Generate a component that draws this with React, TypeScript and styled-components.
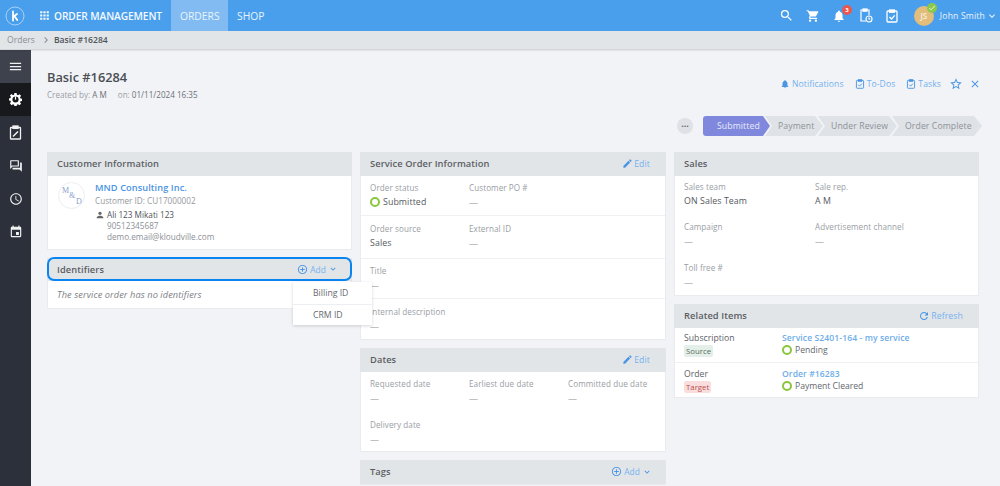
import React from "react";
import styled, { createGlobalStyle } from "styled-components";
import { MdSearch, MdShoppingCart, MdNotifications, MdApps, MdMenu, MdEdit, MdRefresh, MdPerson, MdExpandMore, MdChevronRight, MdClose, MdStarBorder, MdAddCircleOutline, MdEvent, MdOutlineAccessTime, MdOutlineForum, MdCheck } from "react-icons/md";

const Global = createGlobalStyle`
  html, body { margin: 0; padding: 0; height: 486px; overflow: hidden; background: #f2f3f6; }
  body { font-family: "Open Sans", "Noto Sans", sans-serif; font-size: 9px; color: #555; }
  * { box-sizing: border-box; }
`;

const Page = styled.div`width: 1000px; height: 486px; overflow: hidden; display: flex; flex-direction: column;`;
const TopBar = styled.header`height: 31px; flex: none; background: #4a9fec; color: #fff; display: flex; align-items: center; padding-left: 5px;`;
const Logo = styled.svg`width: 20px; height: 20px; flex: none; margin-right: 13px;`;
const AppTitle = styled.div`display: flex; align-items: center; gap: 3px; font-size: 10.2px; font-weight: 600; letter-spacing: -0.01em; margin-right: 10px; color: #f4f9fe; width: 123px; white-space: nowrap; svg { flex: none; }`;
const NavItem = styled.div<{ $active?: boolean }>`height: 31px; padding: 0 10px 0 9px; display: flex; align-items: center; font-size: 10.3px; background: ${p => (p.$active ? "#82bbf1" : "transparent")}; color: #e8f3fd; width: ${p => (p.$active ? "57px" : "auto")};`;
const RightTools = styled.div`margin-left: auto; display: flex; align-items: center; height: 31px; color: #fff;`;
const ToolSlot = styled.div<{ $w: number }>`width: ${p => p.$w}px; display: flex; justify-content: center; position: relative;`;
const Badge = styled.span`position: absolute; top: -4px; left: 16px; width: 10px; height: 10px; border-radius: 50%; background: #e9574f; color: #fff; font-size: 6px; font-weight: 700; line-height: 10px; text-align: center;`;
const Avatar = styled.div`position: relative; width: 20px; height: 20px; border-radius: 50%; background: #e3bd7c; color: #f6f0e2; font-size: 8px; font-weight: 600; line-height: 20px; text-align: center; margin-left: 9px; margin-right: 6px;`;
const AvatarCheck = styled.span`position: absolute; top: -3px; right: -3px; width: 10px; height: 10px; border-radius: 50%; background: #8cc84b; color: #fff; display: flex; align-items: center; justify-content: center;`;
const UserName = styled.div`font-size: 8.6px; letter-spacing: 0.02em; color: #e8f3fd; display: flex; align-items: center; gap: 1px; padding-right: 2px;`;

const Crumbs = styled.div`height: 19px; flex: none; background: #e2e5e8; border-bottom: 1px solid #d4d6d9; box-shadow: 0 1px 1px rgba(0,0,0,.06); display: flex; align-items: center; padding-left: 7px; font-size: 8.6px; color: #8a8f96; position: relative; z-index: 1;`;
const CrumbCurrent = styled.span`font-weight: 600; color: #50555b;`;

const Body = styled.div`flex: 1; display: flex; min-height: 0;`;
const Side = styled.nav`width: 31px; flex: none; background: #2b303b; display: flex; flex-direction: column; color: #f1f1f1;`;
const SideItem = styled.div<{ $variant?: "menu" | "active" }>`height: 33px; flex: none; display: flex; align-items: center; justify-content: center; background: ${p => (p.$variant === "menu" ? "#3d424d" : p.$variant === "active" ? "#17191d" : "transparent")};`;

const Main = styled.main`flex: 1; min-width: 0; padding: 19px 22px 0 16px; overflow: hidden;`;
const TitleRow = styled.div`display: flex; justify-content: space-between; align-items: flex-start; height: 37px;`;
const H1 = styled.h1`margin: 0; font-size: 12.8px; font-weight: 600; line-height: 16px; color: #4a4e54;`;
const Meta = styled.div`font-size: 8.1px; line-height: 11px; margin-top: 4px; color: #9a9ea4; span { color: #6c7076; } i { font-style: normal; margin-left: 9px; }`;
const Actions = styled.div`display: flex; align-items: center; color: #73b1ee; font-size: 8.6px; letter-spacing: .01em; margin-top: 7px; height: 15px; margin-right: -3px;`;
const ActionLink = styled.span`display: flex; align-items: center; gap: 2px; margin-right: 11px;`;
const ActionIcon = styled.span`display: flex; color: #4a95e4;`;
const StarIcon = styled(ActionIcon)`margin: 0 6px 0 -3px;`;

const PipelineRow = styled.div`display: flex; justify-content: flex-end; align-items: center; margin-top: 10px; height: 20px; margin-right: -4px;`;
const MoreBtn = styled.div`width: 16px; height: 16px; border-radius: 50%; background: #dfe1e6; color: #666; font-size: 9px; font-weight: 700; line-height: 12px; text-align: center; margin-right: 10px;`;
const Step = styled.div<{ $active?: boolean; $w: number; $first?: boolean }>`
  width: ${p => p.$w}px; height: 20px; display: flex; align-items: center; font-size: 8.7px; letter-spacing: .01em;
  padding-left: ${p => (p.$first ? 14 : 13)}px; margin-left: ${p => (p.$first ? 0 : -5)}px;
  color: ${p => (p.$active ? "#e9ebfa" : "#8d9298")};
  background: ${p => (p.$active ? "#8088dd" : "#dfe2e6")};
  position: relative; z-index: ${p => (p.$active ? 2 : 1)};
  border-radius: ${p => (p.$first ? "3px 0 0 3px" : "0")};
  clip-path: ${p => p.$first ? "polygon(0 0, calc(100% - 7px) 0, 100% 50%, calc(100% - 7px) 100%, 0 100%)" : "polygon(0 0, calc(100% - 8px) 0, 100% 50%, calc(100% - 8px) 100%, 0 100%, 7px 50%)"};
`;

const Columns = styled.div`display: grid; grid-template-columns: 305px 306px 305px; gap: 8px; margin-top: 16px; align-items: start;`;
const Col = styled.div`display: flex; flex-direction: column; gap: 8px;`;
const Panel = styled.section`background: #fff; border: 1px solid #e9ebee; position: relative;`;
const PanelHead = styled.div<{ $h?: number }>`height: ${p => p.$h ?? 24}px; margin: -1px -1px 0; background: #e2e5e8; display: flex; align-items: center; justify-content: space-between; padding: 0 16px 1px 10px; font-size: 9.3px; font-weight: 600; color: #5a5e64; letter-spacing: .01em;`;
const HeadAction = styled.span`display: flex; align-items: center; gap: 1px; font-size: 8.7px; font-weight: 400; color: #74b2ee;`;
const AddAction = styled(HeadAction)`font-size: 8.4px; gap: 2px; margin-right: -2px;`;
const HeadIcon = styled.span`display: flex; color: #4a95e4;`;
const FocusRing = styled.div`position: absolute; inset: 0 -1px auto; height: 24px; border: 2px solid #0a84f0; border-radius: 7px; pointer-events: none; margin: -2px 0 0;`;

const Cust = styled.div`display: flex; padding: 5px 10px 7px 10px;`;
const CustLogo = styled.div`width: 27px; height: 27px; border: 1px solid #eceef1; border-radius: 50%; margin-top: 1px; margin-right: 10px; flex: none; font-family: "Liberation Serif", serif; color: #8b9fd0; font-size: 8px; position: relative;`;
const LogoGlyph = styled.span<{ $x: number; $y: number }>`position: absolute; left: ${p => p.$x}px; top: ${p => p.$y}px; line-height: 8px;`;
const CustName = styled.div`font-size: 9.2px; font-weight: 600; color: #4a93e3; line-height: 13px; letter-spacing: .01em;`;
const CustId = styled.div`font-size: 8.2px; color: #94989e; line-height: 12px; margin-top: 1px;`;
const Contact = styled.div`display: flex; align-items: center; gap: 2px; font-size: 8.2px; color: #4f5359; line-height: 11px; margin-top: 2px;`;
const ContactLine = styled.div`font-size: 8.2px; color: #8c9096; line-height: 11px; padding-left: 12px;`;
const Empty = styled.div`height: 27px; padding: 0 9px 1px; font-size: 9.2px; font-style: italic; color: #7c8086; display: flex; align-items: center; letter-spacing: .01em;`;
const Menu = styled.div`position: absolute; top: 23px; right: -21px; width: 79px; background: #fff; box-shadow: 0 1px 3px rgba(0,0,0,.16); z-index: 5;`;
const MenuItem = styled.div`height: 21.500px; padding-left: 20px; display: flex; align-items: center; font-size: 8.7px; color: #666a70; & + & { border-top: 1px solid #eceef1; }`;

const Row = styled.div<{ $h: number; $cols?: string; $border?: boolean; $pt?: number }>`min-height: ${p => p.$h}px; display: grid; align-content: start; grid-template-columns: ${p => p.$cols ?? "99px 99px 1fr"}; padding: ${p => p.$pt ?? (p.$border ? 7 : 6)}px 9px 0; row-gap: 14px; ${p => (p.$border ? "border-top: 1px solid #eef0f2;" : "")}`;
const Label = styled.div`font-size: 8.1px; line-height: 11px; color: #9a9ea4; letter-spacing: .01em; white-space: nowrap;`;
const Value = styled.div`font-size: 8.8px; line-height: 12px; color: #555a60; margin-top: 3px; display: flex; align-items: center; gap: 4px; letter-spacing: .01em;`;
const Dash = styled.div`font-size: 9px; line-height: 12px; color: #8d9197; margin-top: 4px;`;
const Ring = styled.span`width: 10px; height: 10px; border-radius: 50%; border: 2.500px solid #8cc63f; display: inline-block; flex: none; margin-right: -1px;`;

const RelRow = styled.div<{ $border?: boolean }>`height: 34px; display: grid; grid-template-columns: 98px 1fr; padding: ${p => (p.$border ? 5 : 4)}px 9px 0; ${p => (p.$border ? "border-top: 1px solid #eef0f2; height: 35px;" : "")}`;
const RelType = styled.div`font-size: 8.7px; line-height: 12px; color: #5e6268;`;
const Tag = styled.span<{ $red?: boolean }>`display: table; font-size: 7.8px; line-height: 12px; padding: 0 2px; border-radius: 2px; background: ${p => (p.$red ? "#fadede" : "#e5efe9")}; color: ${p => (p.$red ? "#b9504b" : "#58705f")}; margin-top: 1px;`;
const RelLink = styled.div`font-size: 8.6px; font-weight: 600; line-height: 12px; color: #6dade9; letter-spacing: .01em;`;
const RelStatus = styled.div`font-size: 8.6px; line-height: 12px; color: #63676d; display: flex; align-items: center; gap: 4px;`;

const ClipTimer = () => (
  <svg width="14" height="15" viewBox="0 0 14 15" fill="none" stroke="#fff" strokeWidth="1.2"><path d="M4 2H2v11h5" /><path d="M8 2h2v5" /><rect x="4" y="1" width="4" height="2.2" fill="#fff" /><circle cx="10" cy="11" r="3" /><path d="M10 9.5V11h1.2" /></svg>
);
const ClipCheck = ({ c = "#fff", s = 14 }: { c?: string; s?: number }) => (
  <svg width={s} height={s} viewBox="0 0 14 14" fill="none" stroke={c} strokeWidth="1.3"><rect x="2" y="2" width="10" height="11" rx="1" /><rect x="4.6" y="1" width="4.8" height="2.2" fill={c} /><path d="M4.5 8l2 2 3.2-3.6" /></svg>
);
const ClipPen = () => (
  <svg width="13" height="15" viewBox="0 0 13 15" fill="none" stroke="#f1f1f1" strokeWidth="1.3"><rect x="1.5" y="2.5" width="10" height="11.5" rx=".6" /><rect x="4" y="1" width="5" height="2.4" fill="#f1f1f1" /><path d="M4 11.5l5-5" strokeWidth="1.6" /></svg>
);
const GearPower = () => (
  <svg width="13" height="13" viewBox="0 0 14 14"><path fill="#fff" d="M5.8 0h2.4l.3 1.9 1.2.5L11.3 1.300l1.700 1.700-1.100 1.600.5 1.200 1.600.3v2.400l-1.600.3-.5 1.200 1.100 1.600-1.700 1.700-1.600-1.100-1.200.5-.3 1.700H5.800l-.3-1.700-1.200-.5-1.600 1.100L1 11.100l1.100-1.600-.5-1.200L0 8V5.800l1.600-.3.5-1.200L1 2.800l1.700-1.600 1.600 1.100 1.200-.5z" /><circle cx="7" cy="7" r="3.300" fill="#17191d" /><path d="M7 3.600v3.600" stroke="#fff" strokeWidth="1.300" /></svg>
);

export default function App() {
  return (
    <Page>
      <Global />
      <TopBar>
        <Logo viewBox="0 0 20 20" fill="none">
          <circle cx="10" cy="10" r="9" stroke="#a9d1f6" strokeWidth="1" />
          <path d="M8 5.500v9M8 11l4-3M9.300 10l3 4" stroke="#fff" strokeWidth="1.800" strokeLinecap="round" />
        </Logo>
        <AppTitle><MdApps size={13} />ORDER MANAGEMENT</AppTitle>
        <NavItem $active>ORDERS</NavItem>
        <NavItem>SHOP</NavItem>
        <RightTools>
          <ToolSlot $w={27}><MdSearch size={15} /></ToolSlot>
          <ToolSlot $w={26}><MdShoppingCart size={14} /></ToolSlot>
          <ToolSlot $w={27}><MdNotifications size={14} /><Badge>3</Badge></ToolSlot>
          <ToolSlot $w={26}><ClipTimer /></ToolSlot>
          <ToolSlot $w={26}><ClipCheck /></ToolSlot>
          <Avatar>JS<AvatarCheck><MdCheck size={8} /></AvatarCheck></Avatar>
          <UserName>John Smith<MdExpandMore size={12} /></UserName>
        </RightTools>
      </TopBar>
      <Crumbs>Orders<MdChevronRight size={12} style={{ margin: "0 2px 0 5px" }} /><CrumbCurrent>Basic #16284</CrumbCurrent></Crumbs>
      <Body>
        <Side>
          <SideItem $variant="menu"><MdMenu size={15} /></SideItem>
          <SideItem $variant="active"><GearPower /></SideItem>
          <SideItem><ClipPen /></SideItem>
          <SideItem><MdOutlineForum size={14} /></SideItem>
          <SideItem><MdOutlineAccessTime size={14} /></SideItem>
          <SideItem><MdEvent size={14} /></SideItem>
        </Side>
        <Main>
          <TitleRow>
            <div>
              <H1>Basic #16284</H1>
              <Meta>Created by: <span>A M</span> <i>on:</i> <span>01/11/2024 16:35</span></Meta>
            </div>
            <Actions>
              <ActionLink><HeadIcon><MdNotifications size={10} /></HeadIcon>Notifications</ActionLink>
              <ActionLink><ClipCheck c="#4a95e4" s={10} />To-Dos</ActionLink>
              <ActionLink><ClipCheck c="#4a95e4" s={10} />Tasks</ActionLink>
              <StarIcon><MdStarBorder size={14} /></StarIcon>
              <ActionIcon><MdClose size={12} /></ActionIcon>
            </Actions>
          </TitleRow>
          <PipelineRow>
            <MoreBtn>...</MoreBtn>
            <Step $first $active $w={67}>Submitted</Step>
            <Step $w={58}>Payment</Step>
            <Step $w={79}>Under Review</Step>
            <Step $w={90}>Order Complete</Step>
          </PipelineRow>
          <Columns>
            <Col>
              <Panel>
                <PanelHead>Customer Information</PanelHead>
                <Cust>
                  <CustLogo>
                    <LogoGlyph $x={3} $y={4}>M</LogoGlyph>
                    <LogoGlyph $x={10} $y={9}>&amp;</LogoGlyph>
                    <LogoGlyph $x={17} $y={15}>D</LogoGlyph>
                  </CustLogo>
                  <div>
                    <CustName>MND Consulting Inc.</CustName>
                    <CustId>Customer ID: CU17000002</CustId>
                    <Contact><MdPerson size={10} color="#666" />Ali 123 Mikati 123</Contact>
                    <ContactLine>90512345687</ContactLine>
                    <ContactLine>demo.email@kloudville.com</ContactLine>
                  </div>
                </Cust>
              </Panel>
              <Panel>
                <PanelHead $h={23}>
                  Identifiers
                  <AddAction><HeadIcon><MdAddCircleOutline size={11} /></HeadIcon>Add<HeadIcon><MdExpandMore size={10} /></HeadIcon></AddAction>
                </PanelHead>
                <FocusRing />
                <Empty>The service order has no identifiers</Empty>
                <Menu>
                  <MenuItem>Billing ID</MenuItem>
                  <MenuItem>CRM ID</MenuItem>
                </Menu>
              </Panel>
            </Col>
            <Col>
              <Panel>
                <PanelHead>Service Order Information<HeadAction><HeadIcon><MdEdit size={11} /></HeadIcon>Edit</HeadAction></PanelHead>
                <Row $h={39}><div><Label>Order status</Label><Value><Ring />Submitted</Value></div><div><Label>Customer PO #</Label><Dash>—</Dash></div></Row>
                <Row $h={43} $border><div><Label>Order source</Label><Value>Sales</Value></div><div><Label>External ID</Label><Dash>—</Dash></div></Row>
                <Row $h={40} $border $pt={6}><div><Label>Title</Label><Dash>—</Dash></div></Row>
                <Row $h={41} $border $cols="1fr"><div><Label>Internal description</Label><Dash>—</Dash></div></Row>
              </Panel>
              <Panel>
                <PanelHead>Dates<HeadAction><HeadIcon><MdEdit size={11} /></HeadIcon>Edit</HeadAction></PanelHead>
                <Row $h={79}>
                  <div><Label>Requested date</Label><Dash>—</Dash></div>
                  <div><Label>Earliest due date</Label><Dash>—</Dash></div>
                  <div><Label>Committed due date</Label><Dash>—</Dash></div>
                  <div><Label>Delivery date</Label><Dash>—</Dash></div>
                </Row>
              </Panel>
              <Panel>
                <PanelHead>Tags<AddAction><HeadIcon><MdAddCircleOutline size={11} /></HeadIcon>Add<HeadIcon><MdExpandMore size={10} /></HeadIcon></AddAction></PanelHead>
              </Panel>
            </Col>
            <Col>
              <Panel>
                <PanelHead>Sales</PanelHead>
                <Row $h={119} $cols="131px 1fr" $pt={5}>
                  <div><Label>Sales team</Label><Value>ON Sales Team</Value></div>
                  <div><Label>Sale rep.</Label><Value>A M</Value></div>
                  <div><Label>Campaign</Label><Dash>—</Dash></div>
                  <div><Label>Advertisement channel</Label><Dash>—</Dash></div>
                  <div><Label>Toll free #</Label><Dash>—</Dash></div>
                </Row>
              </Panel>
              <Panel>
                <PanelHead>Related Items<HeadAction><HeadIcon><MdRefresh size={12} /></HeadIcon>Refresh</HeadAction></PanelHead>
                <RelRow>
                  <div><RelType>Subscription</RelType><Tag>Source</Tag></div>
                  <div><RelLink>Service S2401-164 - my service</RelLink><RelStatus><Ring />Pending</RelStatus></div>
                </RelRow>
                <RelRow $border>
                  <div><RelType>Order</RelType><Tag $red>Target</Tag></div>
                  <div><RelLink>Order #16283</RelLink><RelStatus><Ring />Payment Cleared</RelStatus></div>
                </RelRow>
              </Panel>
            </Col>
          </Columns>
        </Main>
      </Body>
    </Page>
  );
}
